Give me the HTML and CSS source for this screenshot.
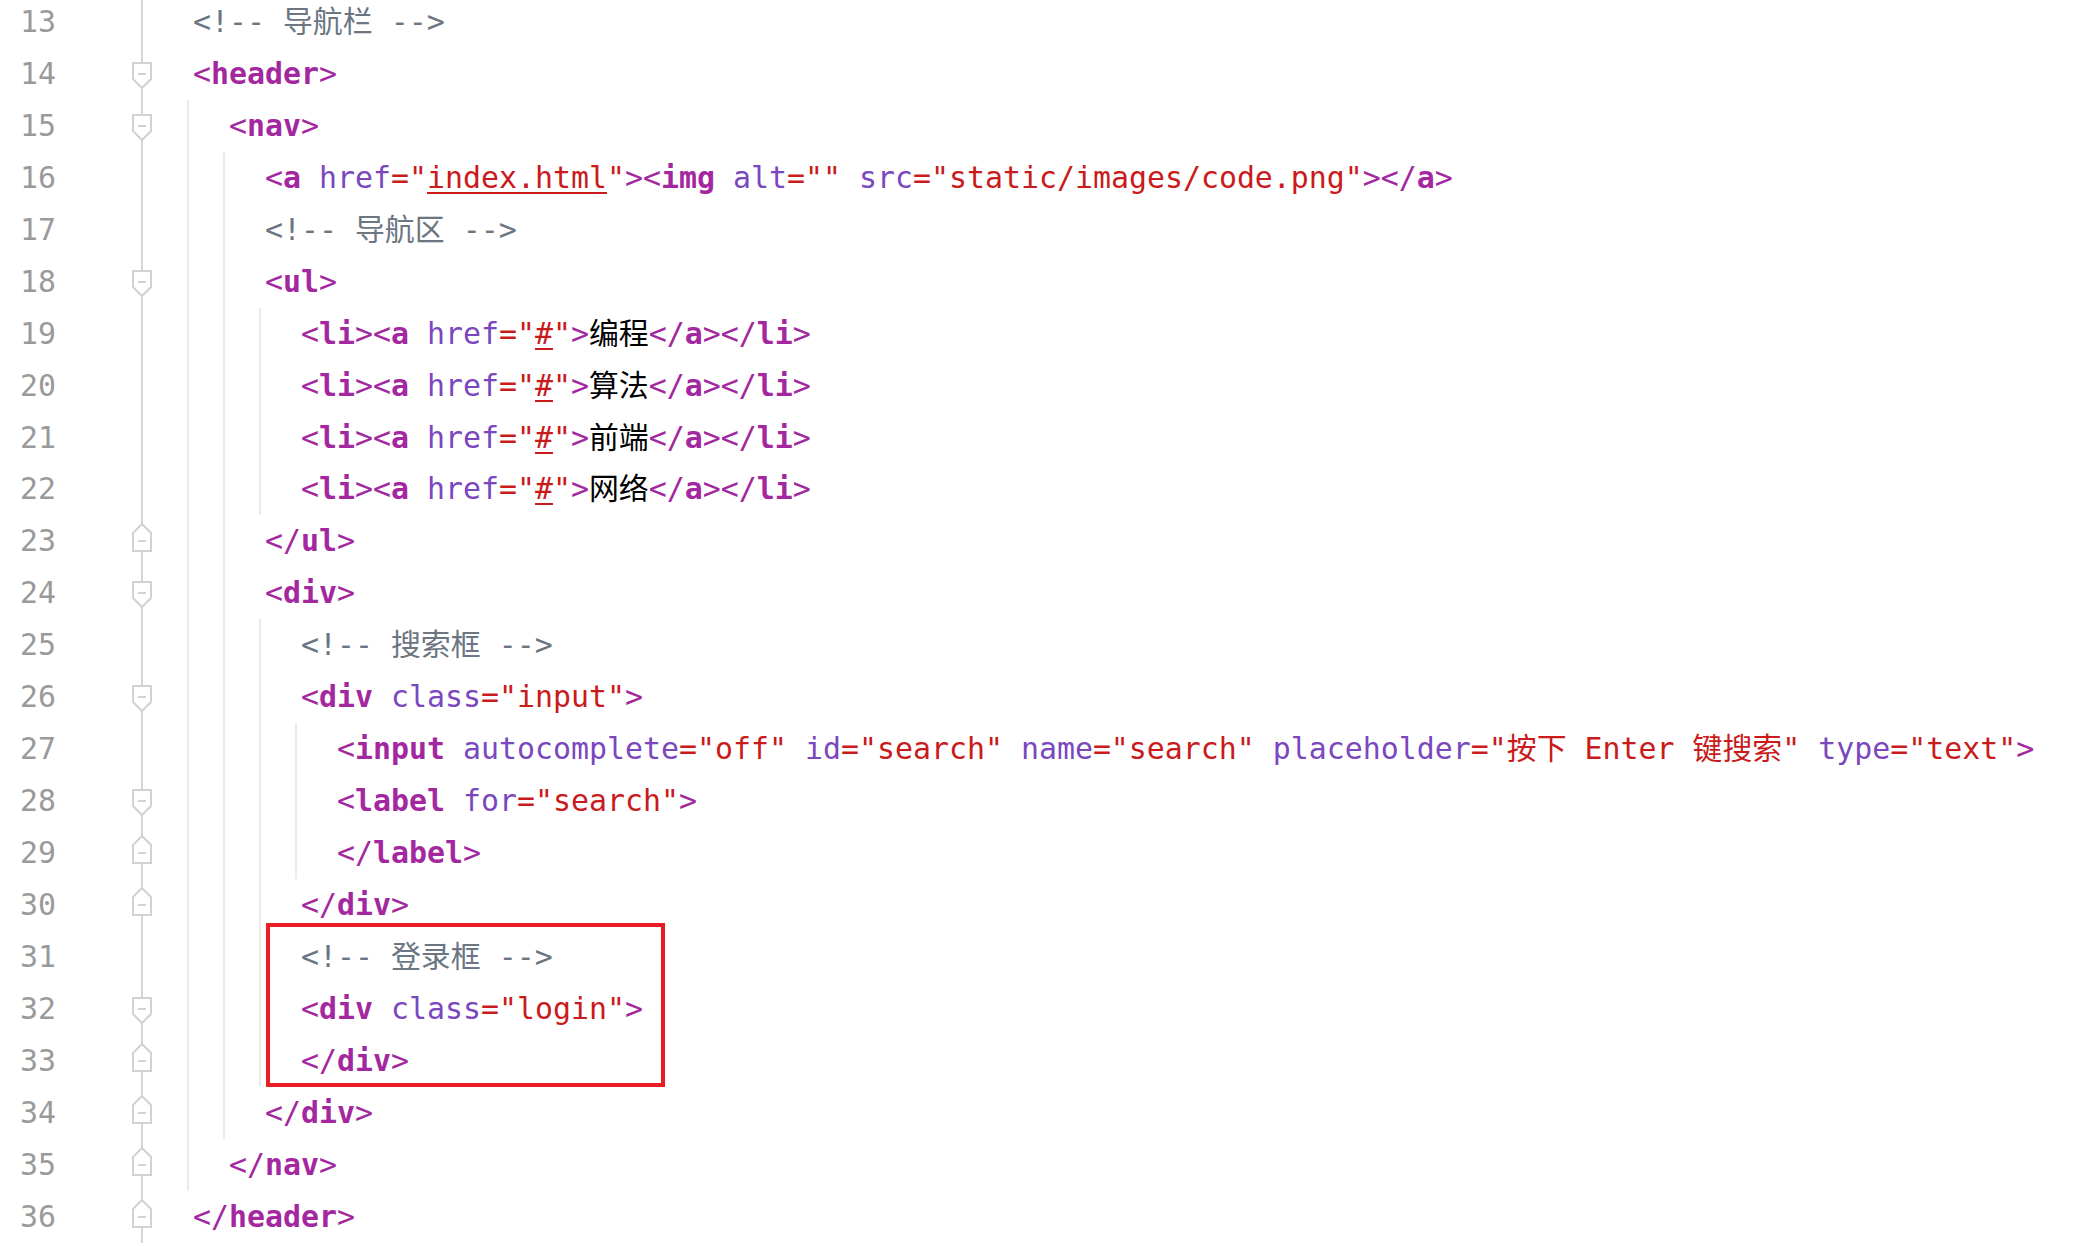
FILE: index.html
```html
<!DOCTYPE html>
<html lang="zh-CN">
<head>
<meta charset="utf-8">
<title>header.html</title>
<link rel="stylesheet" href="styles.css">
</head>
<body>
<div class="editor">
  <div class="gutter">
    <div class="gl"><span class="num">13</span><span class="fold"></span></div>
    <div class="gl"><span class="num">14</span><span class="fold"><svg class="mk" viewBox="0 0 22 52"><path class="shape" d="M2 15H20V31L11 40L2 31Z"/><path class="minus" d="M7 26H15"/></svg></span></div>
    <div class="gl"><span class="num">15</span><span class="fold"><svg class="mk" viewBox="0 0 22 52"><path class="shape" d="M2 15H20V31L11 40L2 31Z"/><path class="minus" d="M7 26H15"/></svg></span></div>
    <div class="gl"><span class="num">16</span><span class="fold"></span></div>
    <div class="gl"><span class="num">17</span><span class="fold"></span></div>
    <div class="gl"><span class="num">18</span><span class="fold"><svg class="mk" viewBox="0 0 22 52"><path class="shape" d="M2 15H20V31L11 40L2 31Z"/><path class="minus" d="M7 26H15"/></svg></span></div>
    <div class="gl"><span class="num">19</span><span class="fold"></span></div>
    <div class="gl"><span class="num">20</span><span class="fold"></span></div>
    <div class="gl"><span class="num">21</span><span class="fold"></span></div>
    <div class="gl"><span class="num">22</span><span class="fold"></span></div>
    <div class="gl"><span class="num">23</span><span class="fold"><svg class="mk" viewBox="0 0 22 52"><path class="shape" d="M11 9L20 18V36H2V18Z"/><path class="minus" d="M7 26H15"/></svg></span></div>
    <div class="gl"><span class="num">24</span><span class="fold"><svg class="mk" viewBox="0 0 22 52"><path class="shape" d="M2 15H20V31L11 40L2 31Z"/><path class="minus" d="M7 26H15"/></svg></span></div>
    <div class="gl"><span class="num">25</span><span class="fold"></span></div>
    <div class="gl"><span class="num">26</span><span class="fold"><svg class="mk" viewBox="0 0 22 52"><path class="shape" d="M2 15H20V31L11 40L2 31Z"/><path class="minus" d="M7 26H15"/></svg></span></div>
    <div class="gl"><span class="num">27</span><span class="fold"></span></div>
    <div class="gl"><span class="num">28</span><span class="fold"><svg class="mk" viewBox="0 0 22 52"><path class="shape" d="M2 15H20V31L11 40L2 31Z"/><path class="minus" d="M7 26H15"/></svg></span></div>
    <div class="gl"><span class="num">29</span><span class="fold"><svg class="mk" viewBox="0 0 22 52"><path class="shape" d="M11 9L20 18V36H2V18Z"/><path class="minus" d="M7 26H15"/></svg></span></div>
    <div class="gl"><span class="num">30</span><span class="fold"><svg class="mk" viewBox="0 0 22 52"><path class="shape" d="M11 9L20 18V36H2V18Z"/><path class="minus" d="M7 26H15"/></svg></span></div>
    <div class="gl"><span class="num">31</span><span class="fold"></span></div>
    <div class="gl"><span class="num">32</span><span class="fold"><svg class="mk" viewBox="0 0 22 52"><path class="shape" d="M2 15H20V31L11 40L2 31Z"/><path class="minus" d="M7 26H15"/></svg></span></div>
    <div class="gl"><span class="num">33</span><span class="fold"><svg class="mk" viewBox="0 0 22 52"><path class="shape" d="M11 9L20 18V36H2V18Z"/><path class="minus" d="M7 26H15"/></svg></span></div>
    <div class="gl"><span class="num">34</span><span class="fold"><svg class="mk" viewBox="0 0 22 52"><path class="shape" d="M11 9L20 18V36H2V18Z"/><path class="minus" d="M7 26H15"/></svg></span></div>
    <div class="gl"><span class="num">35</span><span class="fold"><svg class="mk" viewBox="0 0 22 52"><path class="shape" d="M11 9L20 18V36H2V18Z"/><path class="minus" d="M7 26H15"/></svg></span></div>
    <div class="gl"><span class="num">36</span><span class="fold"><svg class="mk" viewBox="0 0 22 52"><path class="shape" d="M11 9L20 18V36H2V18Z"/><path class="minus" d="M7 26H15"/></svg></span></div>
  </div>
  <div class="code">
    <div class="line"><span class="c">&lt;!-- 导航栏 --&gt;</span></div>
    <div class="line"><span class="p">&lt;</span><span class="t">header</span><span class="p">&gt;</span></div>
    <div class="blk">
      <div class="line"><span class="p">&lt;</span><span class="t">nav</span><span class="p">&gt;</span></div>
      <div class="blk">
        <div class="line"><span class="p">&lt;</span><span class="t">a</span> <span class="a">href</span><span class="s">="<span class="u">index.html</span>"</span><span class="p">&gt;&lt;</span><span class="t">img</span> <span class="a">alt</span><span class="s">=""</span> <span class="a">src</span><span class="s">="static/images/code.png"</span><span class="p">&gt;&lt;/</span><span class="t">a</span><span class="p">&gt;</span></div>
        <div class="line"><span class="c">&lt;!-- 导航区 --&gt;</span></div>
        <div class="line"><span class="p">&lt;</span><span class="t">ul</span><span class="p">&gt;</span></div>
        <div class="blk">
          <div class="line"><span class="p">&lt;</span><span class="t">li</span><span class="p">&gt;&lt;</span><span class="t">a</span> <span class="a">href</span><span class="s">="<span class="u">#</span>"</span><span class="p">&gt;</span><span class="x">编程</span><span class="p">&lt;/</span><span class="t">a</span><span class="p">&gt;&lt;/</span><span class="t">li</span><span class="p">&gt;</span></div>
          <div class="line"><span class="p">&lt;</span><span class="t">li</span><span class="p">&gt;&lt;</span><span class="t">a</span> <span class="a">href</span><span class="s">="<span class="u">#</span>"</span><span class="p">&gt;</span><span class="x">算法</span><span class="p">&lt;/</span><span class="t">a</span><span class="p">&gt;&lt;/</span><span class="t">li</span><span class="p">&gt;</span></div>
          <div class="line"><span class="p">&lt;</span><span class="t">li</span><span class="p">&gt;&lt;</span><span class="t">a</span> <span class="a">href</span><span class="s">="<span class="u">#</span>"</span><span class="p">&gt;</span><span class="x">前端</span><span class="p">&lt;/</span><span class="t">a</span><span class="p">&gt;&lt;/</span><span class="t">li</span><span class="p">&gt;</span></div>
          <div class="line"><span class="p">&lt;</span><span class="t">li</span><span class="p">&gt;&lt;</span><span class="t">a</span> <span class="a">href</span><span class="s">="<span class="u">#</span>"</span><span class="p">&gt;</span><span class="x">网络</span><span class="p">&lt;/</span><span class="t">a</span><span class="p">&gt;&lt;/</span><span class="t">li</span><span class="p">&gt;</span></div>
        </div>
        <div class="line"><span class="p">&lt;/</span><span class="t">ul</span><span class="p">&gt;</span></div>
        <div class="line"><span class="p">&lt;</span><span class="t">div</span><span class="p">&gt;</span></div>
        <div class="blk">
          <div class="line"><span class="c">&lt;!-- 搜索框 --&gt;</span></div>
          <div class="line"><span class="p">&lt;</span><span class="t">div</span> <span class="a">class</span><span class="s">="input"</span><span class="p">&gt;</span></div>
          <div class="blk">
            <div class="line"><span class="p">&lt;</span><span class="t">input</span> <span class="a">autocomplete</span><span class="s">="off"</span> <span class="a">id</span><span class="s">="search"</span> <span class="a">name</span><span class="s">="search"</span> <span class="a">placeholder</span><span class="s">="按下 Enter 键搜索"</span> <span class="a">type</span><span class="s">="text"</span><span class="p">&gt;</span></div>
            <div class="line"><span class="p">&lt;</span><span class="t">label</span> <span class="a">for</span><span class="s">="search"</span><span class="p">&gt;</span></div>
            <div class="line"><span class="p">&lt;/</span><span class="t">label</span><span class="p">&gt;</span></div>
          </div>
          <div class="line"><span class="p">&lt;/</span><span class="t">div</span><span class="p">&gt;</span></div>
          <div class="hl">
            <div class="line"><span class="c">&lt;!-- 登录框 --&gt;</span></div>
            <div class="line"><span class="p">&lt;</span><span class="t">div</span> <span class="a">class</span><span class="s">="login"</span><span class="p">&gt;</span></div>
            <div class="line"><span class="p">&lt;/</span><span class="t">div</span><span class="p">&gt;</span></div>
          </div>
        </div>
        <div class="line"><span class="p">&lt;/</span><span class="t">div</span><span class="p">&gt;</span></div>
      </div>
      <div class="line"><span class="p">&lt;/</span><span class="t">nav</span><span class="p">&gt;</span></div>
    </div>
    <div class="line"><span class="p">&lt;/</span><span class="t">header</span><span class="p">&gt;</span></div>
  </div>
</div>
</body>
</html>
```
FILE: styles.css
```css
html, body {
  margin: 0;
  padding: 0;
  background: #ffffff;
}

body {
  overflow: hidden;
}

.editor {
  display: flex;
  margin-top: -4px;
  font-family: "DejaVu Sans Mono", "Noto Sans CJK SC", monospace;
  font-size: 29.9px;
  line-height: 51.95px;
}

.gutter {
  flex: none;
  width: 193px;
  display: flex;
  flex-direction: column;
}

.gl {
  display: flex;
  height: 51.95px;
}

.num {
  width: 56px;
  text-align: right;
  color: #9a9a9a;
}

.fold {
  width: 22px;
  height: 51.95px;
  margin-left: 75px;
  background: linear-gradient(#d5d5d5, #d5d5d5) center / 2px 100% no-repeat;
}

.mk {
  display: block;
  width: 22px;
  height: 52px;
}

.mk .shape {
  fill: #ffffff;
  stroke: #d2d2d2;
  stroke-width: 2;
  stroke-linejoin: miter;
}

.mk .minus {
  stroke: #d2d2d2;
  stroke-width: 2;
}

.code {
  flex: 1;
  min-width: 0;
}

.line {
  height: 51.95px;
  white-space: pre;
}

.blk {
  margin-left: -6px;
  border-left: 2px solid #ebebeb;
  padding-left: 40px;
}

.hl {
  position: relative;
}

.hl::after {
  content: "";
  position: absolute;
  left: -35px;
  top: -8px;
  width: 399px;
  height: 164px;
  box-sizing: border-box;
  border: 4px solid #ea1d27;
}

.c { color: #6b7682; }
.p { color: #a3289f; }
.t { color: #a3289f; font-weight: bold; }
.a { color: #7a47be; }
.s { color: #c91b1b; }
.u {
  text-decoration: underline;
  text-decoration-thickness: 2px;
  text-underline-offset: 4px;
}
.x { color: #000000; }
```
